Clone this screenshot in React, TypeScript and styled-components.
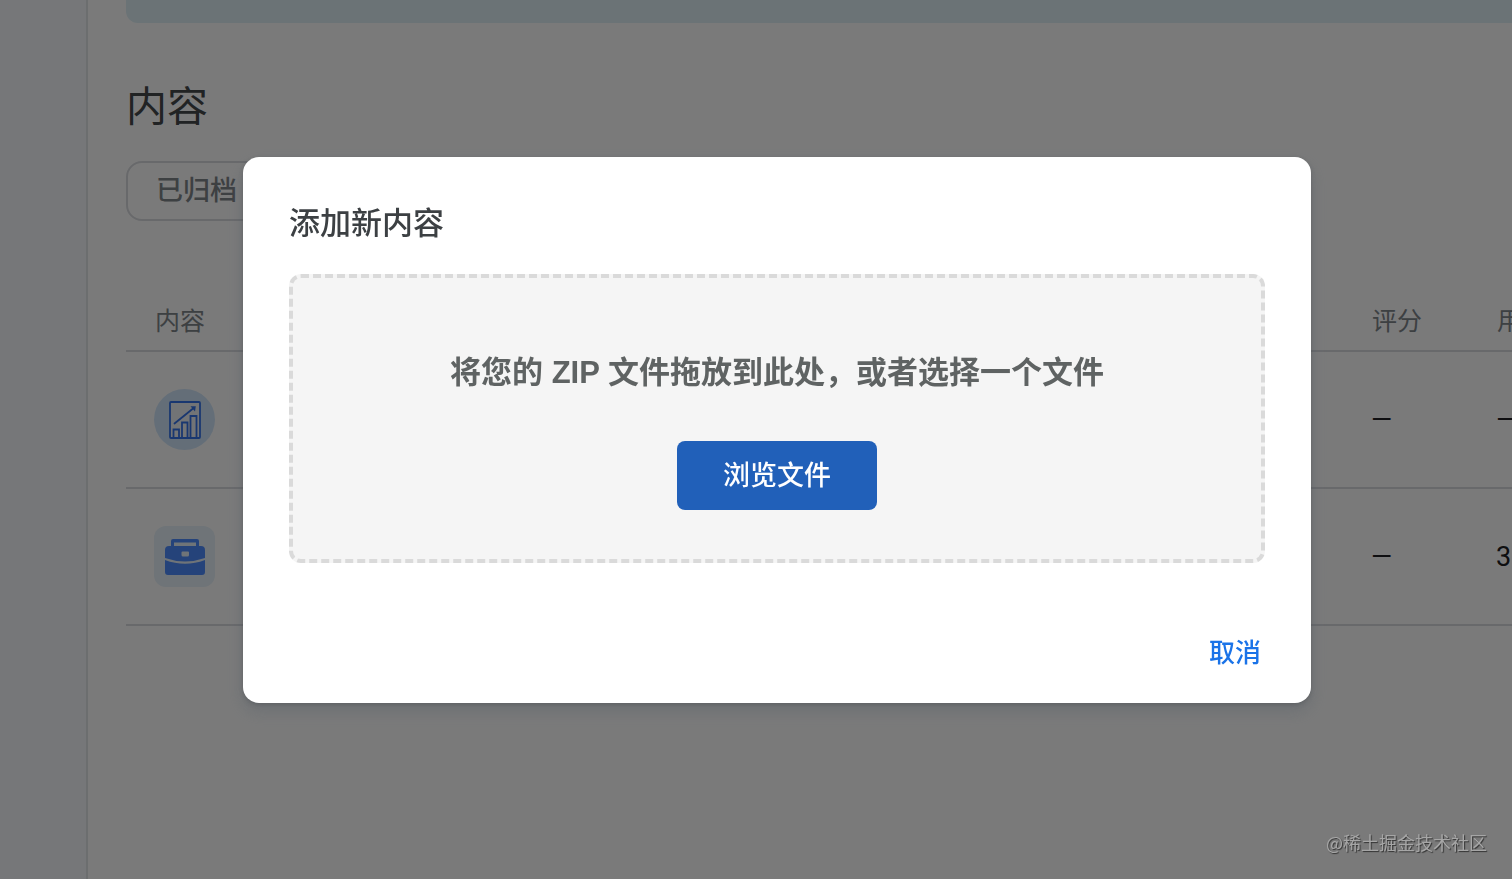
import React from 'react';
import styled, { createGlobalStyle } from 'styled-components';

const GlobalStyle = createGlobalStyle`
  *, *::before, *::after { box-sizing: border-box; }
  body {
    margin: 0;
    background: #fff;
    color: #3c4043;
    font-family: Roboto, "Noto Sans CJK SC", sans-serif;
    overflow: hidden;
  }
  button { font-family: inherit; cursor: pointer; }
`;

const Page = styled.div`
  display: flex;
  min-height: 100vh;
  overflow: hidden;
`;

const Sidebar = styled.aside`
  flex: 0 0 88px;
  background: #f6f9fd;
  border-right: 2px solid #e2e5e8;
`;

const Main = styled.main`
  flex: 1;
  min-width: 0;
  padding-left: 38px;
  overflow: hidden;
`;

const Banner = styled.div`
  height: 23px;
  background: #dff0f7;
  border-radius: 0 0 0 12px;
`;

const PageTitle = styled.h1`
  margin: 52px 0 22px;
  color: #46494c;
  font-size: 41px;
  line-height: 64px;
  font-weight: 400;
`;

const Chip = styled.button`
  display: block;
  height: 60px;
  padding: 0 28px;
  border: 2px solid #dadce0;
  border-radius: 16px;
  background: transparent;
  color: #80868b;
  font-size: 27px;
  line-height: 40px;
  font-weight: 500;
`;

const ContentTable = styled.table`
  width: calc(100% + 120px);
  margin-top: 70px;
  table-layout: fixed;
  border-collapse: collapse;
  text-align: left;
`;

const HeadCell = styled.th<{ $width?: number }>`
  width: ${({ $width }) => ($width ? `${$width}px` : 'auto')};
  height: 60px;
  padding: 2px 0 0 29px;
  border-bottom: 2px solid #dadce0;
  color: #80868b;
  font-size: 25px;
  line-height: 36px;
  font-weight: 400;
`;

const Cell = styled.td`
  height: 137px;
  padding: 0 0 0 28px;
  border-bottom: 2px solid #dadce0;
  color: #202124;
  font-size: 27px;
  line-height: 36px;
`;

const IconTile = styled.span<{ $round?: boolean }>`
  display: flex;
  align-items: center;
  justify-content: center;
  width: 61px;
  height: 61px;
  border-radius: ${({ $round }) => ($round ? '50%' : '12px')};
  background: ${({ $round }) => ($round ? '#d2e7fb' : '#e8f2fa')};
`;

const Overlay = styled.div`
  position: fixed;
  inset: 0;
  display: flex;
  align-items: flex-start;
  justify-content: center;
  padding: 157px 0 0 42px;
  background: rgba(0, 0, 0, 0.52);
`;

const Dialog = styled.section`
  width: 1068px;
  max-width: 100%;
  padding: 43px 46px 22px;
  border-radius: 16px;
  background: #fff;
  box-shadow: 0 2px 4px rgba(60, 64, 67, 0.3), 0 8px 16px 2px rgba(84, 92, 104, 0.3);
`;

const DialogTitle = styled.h2`
  margin: 0 0 26px;
  font-size: 31px;
  line-height: 48px;
  font-weight: 500;
`;

const DropZone = styled.div`
  display: flex;
  flex-direction: column;
  align-items: center;
  height: 289px;
  padding-top: 71px;
  border: 4px dashed #dadada;
  border-radius: 12px;
  background: #f5f5f5;
`;

const DropHint = styled.p`
  margin: 0 0 44px;
  color: #5f6363;
  font-family: "Liberation Sans", "Noto Sans CJK SC", sans-serif;
  font-size: 31px;
  line-height: 48px;
  font-weight: 600;
`;

const BrowseButton = styled.button`
  height: 69px;
  padding: 0 46px;
  border: 0;
  border-radius: 8px;
  background: #2160b9;
  color: #fff;
  font-size: 27px;
  line-height: 40px;
  font-weight: 500;
`;

const Actions = styled.footer`
  display: flex;
  justify-content: flex-end;
  margin-top: 62px;
`;

const CancelButton = styled.button`
  padding: 4px;
  height: 56px;
  border: 0;
  background: transparent;
  color: #1a73e8;
  font-size: 26px;
  line-height: 40px;
  font-weight: 500;
`;

const Watermark = styled.span`
  position: fixed;
  right: 25px;
  bottom: 23px;
  color: #a6a6a6;
  font-family: "Noto Sans CJK SC", sans-serif;
  font-size: 18px;
  line-height: 28px;
  text-shadow: 1px 1px 1px rgba(0, 0, 0, 0.6);
`;

const ChartIcon = () => (
  <svg width="32" height="38" viewBox="0 0 32 38" fill="none" stroke="#3674ea" strokeWidth="1.8">
    <rect x="1" y="1" width="30" height="36" rx="1" fill="#eef2f7" />
    <path d="M4.500 37v-8.500h5.500V37M13 37V21.500h5.500V37M21.500 37V15h6v22" />
    <path d="M5.500 22.500 25 6.800" strokeLinecap="round" />
    <path d="M21.500 5.200h5.300l-.8 5.200Z" fill="#3674ea" stroke="none" />
  </svg>
);

const BriefcaseIcon = () => (
  <svg width="42" height="38" viewBox="0 0 42 38" fill="#4f8dff">
    <path
      fillRule="evenodd"
      d="M9 1h24a2 2 0 0 1 2 2v5h2a4 4 0 0 1 4 4v8Q21 27 1 20v-8a4 4 0 0 1 4-4h2V3a2 2 0 0 1 2-2Zm1 3.500V8h22V4.500ZM18.500 13.500a1 1 0 0 0-1 1v2.500a1.500 1.500 0 0 0 1.500 1.500h4.500a1.500 1.500 0 0 0 1.500-1.500v-2.500a1 1 0 0 0-1-1Z"
    />
    <path d="M1 22Q21 29.500 41 22V34a3 3 0 0 1-3 3H4a3 3 0 0 1-3-3Z" />
  </svg>
);

const rows = [
  { id: 'report', round: true, icon: <ChartIcon />, rating: '—', users: '—' },
  { id: 'work', round: false, icon: <BriefcaseIcon />, rating: '—', users: '3' },
];

export default function App() {
  return (
    <>
      <GlobalStyle />
      <Page>
        <Sidebar />
        <Main>
          <Banner />
          <PageTitle>内容</PageTitle>
          <Chip type="button">已归档</Chip>
          <ContentTable>
            <thead>
              <tr>
                <HeadCell scope="col">内容</HeadCell>
                <HeadCell scope="col" $width={125}>评分</HeadCell>
                <HeadCell scope="col" $width={164}>用户</HeadCell>
              </tr>
            </thead>
            <tbody>
              {rows.map((row) => (
                <tr key={row.id}>
                  <Cell>
                    <IconTile $round={row.round}>{row.icon}</IconTile>
                  </Cell>
                  <Cell>{row.rating}</Cell>
                  <Cell>{row.users}</Cell>
                </tr>
              ))}
            </tbody>
          </ContentTable>
        </Main>
      </Page>
      <Overlay>
        <Dialog role="dialog" aria-modal="true" aria-labelledby="dialog-title">
          <DialogTitle id="dialog-title">添加新内容</DialogTitle>
          <DropZone>
            <DropHint>将您的 ZIP 文件拖放到此处，或者选择一个文件</DropHint>
            <BrowseButton type="button">浏览文件</BrowseButton>
          </DropZone>
          <Actions>
            <CancelButton type="button">取消</CancelButton>
          </Actions>
        </Dialog>
      </Overlay>
      <Watermark>@稀土掘金技术社区</Watermark>
    </>
  );
}
